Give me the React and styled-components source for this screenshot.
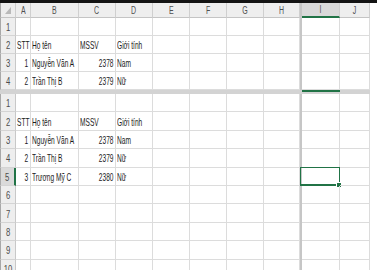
import styled, { createGlobalStyle } from "styled-components";

const GlobalStyle = createGlobalStyle`
  html, body { margin: 0; padding: 0; background: #fff; }
  body { font-family: "Liberation Sans", Arial, sans-serif; }
`;

const GREEN = "#217346";

const leftCols = [
  { key: "A", w: 15 },
  { key: "B", w: 48 },
  { key: "C", w: 37 },
  { key: "D", w: 37 },
  { key: "E", w: 37 },
  { key: "F", w: 37 },
  { key: "G", w: 37 },
  { key: "H", w: 36 },
];
const rightCols = [
  { key: "I", w: 38 },
  { key: "J", w: 30 },
];

const data = {
  2: { A: "STT", B: "Họ tên", C: "MSSV", D: "Giới tính" },
  3: { A: 1, B: "Nguyễn Văn A", C: 2378, D: "Nam" },
  4: { A: 2, B: "Trần Thị B", C: 2379, D: "Nữ" },
  5: { A: 3, B: "Trương Mỹ C", C: 2380, D: "Nữ" },
};

function Corner() {
  return (
    <CornerCell>
      <svg width="8" height="9" viewBox="0 0 8 9">
        <polygon points="7,1 7,8 1,8" fill="#b9b9b9" />
      </svg>
    </CornerCell>
  );
}

function HeaderRow() {
  return (
    <Row $h={15}>
      <Corner />
      {leftCols.map((c) => (
        <HeadCell key={c.key} $w={c.w}>
          <HeadTxt>{c.key}</HeadTxt>
        </HeadCell>
      ))}
      <VSplit />
      {rightCols.map((c) => (
        <HeadCell key={c.key} $w={c.w} $active={c.key === "I"}>
          <HeadTxt>{c.key}</HeadTxt>
        </HeadCell>
      ))}
    </Row>
  );
}

function DataRow({ n, h, activeRow }) {
  const values = data[n] || {};
  return (
    <Row $h={h}>
      <RowHead $active={activeRow === n}>
        <HeadTxt>{n}</HeadTxt>
      </RowHead>
      {leftCols.map((c) => {
        const v = values[c.key];
        const num = typeof v === "number";
        return (
          <Cell key={c.key} $w={c.w} $num={num}>
            {v !== undefined && <Txt $num={num}>{v}</Txt>}
          </Cell>
        );
      })}
      <VSplit />
      {rightCols.map((c) => (
        <Cell key={c.key} $w={c.w}>
          {activeRow === n && c.key === "I" && (
            <Selection>
              <Handle />
            </Selection>
          )}
        </Cell>
      ))}
    </Row>
  );
}

export default function App() {
  return (
    <>
      <GlobalStyle />
      <Screen>
        <Sheet>
          <Pane>
            <HeaderRow />
            {[1, 2, 3, 4].map((n) => (
              <DataRow key={n} n={n} h={18} />
            ))}
          </Pane>
          <HSplit>
            <HSplitMark />
          </HSplit>
          <Pane>
            {[1, 2, 3, 4, 5, 6, 7, 8, 9, 10].map((n) => (
              <DataRow key={n} n={n} h={18.4} activeRow={5} />
            ))}
          </Pane>
        </Sheet>
      </Screen>
    </>
  );
}

const Screen = styled.div`
  width: 377px;
  height: 270px;
  overflow: hidden;
  background: #fff;
  border-top: 3px solid #141414;
  box-sizing: border-box;
`;

const Sheet = styled.div`
  width: 370px;
  display: flex;
  flex-direction: column;
`;

const Pane = styled.div`
  display: flex;
  flex-direction: column;
`;

const Row = styled.div`
  display: flex;
  height: ${(p) => p.$h}px;
  flex: none;
`;

const Cell = styled.div`
  box-sizing: border-box;
  position: relative;
  flex: none;
  width: ${(p) => p.$w}px;
  border-right: 1px solid #dcdcdc;
  border-bottom: 1px solid #dcdcdc;
  display: flex;
  align-items: center;
  justify-content: ${(p) => (p.$num ? "flex-end" : "flex-start")};
  padding: 1px 2px 0 1px;
  white-space: nowrap;
  font-size: 11px;
  color: #1c1c1c;
`;

const Txt = styled.span`
  display: inline-block;
  transform: scaleX(0.6);
  transform-origin: ${(p) => (p.$num ? "right" : "left")} center;
`;

const HeadCell = styled.div`
  box-sizing: border-box;
  flex: none;
  width: ${(p) => p.$w}px;
  background: ${(p) => (p.$active ? "#d9d9d9" : "#eeeeee")};
  border-right: 1px solid #cfcfcf;
  border-bottom: ${(p) => (p.$active ? `2px solid ${GREEN}` : "1px solid #c4c4c4")};
  display: flex;
  align-items: center;
  justify-content: center;
  font-size: 10px;
  color: #505050;
`;

const CornerCell = styled(HeadCell)`
  width: 16px;
  justify-content: flex-end;
  align-items: flex-end;
  padding: 0 3px 2px 0;
  border-left: 1px solid #a8a8a8;
`;

const HeadTxt = styled.span`
  display: inline-block;
  transform: scaleX(0.7);
`;

const RowHead = styled.div`
  box-sizing: border-box;
  flex: none;
  width: 16px;
  background: ${(p) => (p.$active ? "#dadada" : "#eeeeee")};
  border-left: 1px solid #a8a8a8;
  border-right: ${(p) => (p.$active ? `2px solid ${GREEN}` : "1px solid #c8c8c8")};
  border-bottom: 1px solid #d4d4d4;
  display: flex;
  align-items: center;
  justify-content: center;
  padding-top: 1px;
  font-size: 11px;
  color: #4c4c4c;
`;

const VSplit = styled.div`
  flex: none;
  width: 2px;
  background: #c6c6c6;
`;

const HSplit = styled.div`
  flex: none;
  height: 4px;
  background: #d3d3d3;
  display: flex;
  padding-left: 302px;
`;

const HSplitMark = styled.div`
  width: 38px;
  height: 2px;
  background: ${GREEN};
`;

const Selection = styled.div`
  position: absolute;
  left: -2px;
  top: -1px;
  right: -1px;
  bottom: -1px;
  border: 1px solid ${GREEN};
  border-bottom-width: 2px;
`;

const Handle = styled.div`
  position: absolute;
  right: -3px;
  bottom: -4px;
  width: 4px;
  height: 4px;
  background: ${GREEN};
  border: 1px solid #fff;
`;
